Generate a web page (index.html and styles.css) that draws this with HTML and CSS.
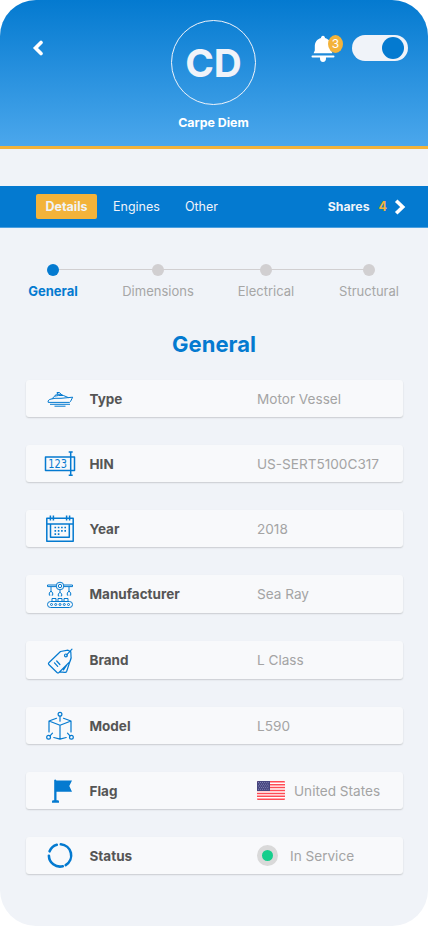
FILE: index.html
```html
<!DOCTYPE html>
<html lang="en">
<head>
<meta charset="utf-8">
<title>Carpe Diem</title>
<link rel="stylesheet" href="styles.css">
</head>
<body>
<div class="screen">
  <header class="header">
    <svg class="back" viewBox="0 0 12 16"><path d="M9 2.500 3.500 8 9 13.500"/></svg>
    <div class="vessel">
      <div class="avatar">CD</div>
      <div class="vessel-name">Carpe Diem</div>
    </div>
    <div class="actions">
      <div class="bell">
        <svg viewBox="0 0 24 28"><path d="M12 0.800c-1.300 0-2 1-2 2.300C6 4.300 3.800 7.300 3.800 11.500v4L2.600 18.300h18.800l-1.200-2.800v-4c0-4.200-2.200-7.200-6.200-8.400 0-1.300-.7-2.300-2-2.300zM1.500 20.500h21a.9.9 0 0 1 0 2H15c.3 3.200-1.200 4.500-3 4.500s-3.300-1.300-3-4.500H1.500a.9.9 0 0 1 0-2z"/></svg>
        <span class="badge">3</span>
      </div>
      <div class="toggle"><span class="knob"></span></div>
    </div>
  </header>

  <nav class="tabs">
    <span class="tab active">Details</span>
    <span class="tab engines">Engines</span>
    <span class="tab other">Other</span>
    <span class="shares">Shares</span>
    <span class="count">4</span>
    <svg class="next" viewBox="0 0 12 16"><path d="M2.200 1.800 8.700 8 2.200 14.200"/></svg>
  </nav>

  <div class="steps">
    <div class="step current"><i></i><span>General</span></div>
    <div class="step"><i></i><span>Dimensions</span></div>
    <div class="step"><i></i><span>Electrical</span></div>
    <div class="step"><i></i><span>Structural</span></div>
  </div>

  <h1>General</h1>

  <main class="cards">
    <div class="card">
      <svg class="icon thin" viewBox="0 0 36 37"><path d="M6 22.200c0-2 1.200-2.800 3-3.100l4-.8h6l11.700-1.100-2.200 4.300-1 .9H7zM10 18.800l2.500-2.600 4-.7h5l5 2.200M12.500 16l2-1.700h4.500l2.300 1.200M16 14.200l-1-1.700h2.500l1.500 1.700M8 24.300h20M12.500 26.200h11"/></svg>
      <span class="label">Type</span><span class="value">Motor Vessel</span>
    </div>
    <div class="card">
      <svg class="icon" viewBox="0 0 36 37"><path d="M3.500 12h29v13.500h-29zM28.700 7v23.500M26.700 7h4M26.700 30.200h4"/><text x="6.300" y="22.700" textLength="18.700" lengthAdjust="spacingAndGlyphs">123</text></svg>
      <span class="label">HIN</span><span class="value">US-SERT5100C317</span>
    </div>
    <div class="card">
      <svg class="icon" viewBox="0 0 36 37"><path d="M4.800 8.200h26.400v23H4.800zM4.800 14h26.400M8.500 14.500v12.700h18.800V14.500M8.400 5.500v5M11.400 5.500v5M24.600 5.500v5M27.600 5.500v5"/><path class="dots" d="M12.500 17.500h12M12.500 20.800h12M12.500 24.200h5"/></svg>
      <span class="label">Year</span><span class="value">2018</span>
    </div>
    <div class="card">
      <svg class="icon thin" viewBox="0 0 36 37"><circle cx="18" cy="10" r="3.800"/><circle cx="18" cy="10" r="1.700"/><path d="M14.200 9H5.500v1.600h8.700M21.800 9h8.700v1.600h-8.700M9 11v4M27 11v4M18 14v3M9 15l-1.700 2v2.200h1M9 15l1.700 2v2.200h-1M27 15l-1.700 2v2.200h1M27 15l1.700 2v2.200h-1M18 16.300l-1.700 1.700v2h1M18 16.300l1.700 1.700v2h-1M10 25.500v-3h4v3M16 25.500v-3h4v3M22 25.500v-3h4v3"/><rect x="5.500" y="25.500" width="25" height="6" rx="3"/><circle cx="9.500" cy="28.500" r="1"/><circle cx="13.700" cy="28.500" r="1"/><circle cx="18" cy="28.500" r="1"/><circle cx="22.300" cy="28.500" r="1"/><circle cx="26.500" cy="28.500" r="1"/></svg>
      <span class="label">Manufacturer</span><span class="value">Sea Ray</span>
    </div>
    <div class="card">
      <svg class="icon outline" viewBox="0 0 36 37"><path d="M6.800 20.800 18.500 9.500l7.500-1.300 2.800 1.600.3 6.500-1 3L17 30.500q-1 .8-2 0L6.800 22.500q-.8-.8 0-1.700zM29.200 15.500 24.700 29.200q-.5 1.400-1.800 1.200l-5.400-.5M25 22.700l-3.500 5.200M24.700 12.800 30 7.200M12.500 20.800l3.200 3.500M14.700 19l3.200 3.500"/><circle cx="23.900" cy="13.400" r="1.400"/></svg>
      <span class="label">Brand</span><span class="value">L Class</span>
    </div>
    <div class="card">
      <svg class="icon outline" viewBox="0 0 36 37"><circle cx="18" cy="7.300" r="1.900"/><circle cx="6.600" cy="30.200" r="1.900"/><circle cx="29.400" cy="30.200" r="1.900"/><path d="M18 9.200v5M14.500 11.300 7 14v11M21.500 11.300l7.500 2.700v11M7 14l11 4.300 11-4.300M18 18.300v13.700M11.800 30.500l6.200 1.600 6.200-1.600M8 28.800l2.500-2.600M28 28.800l-2.500-2.600"/></svg>
      <span class="label">Model</span><span class="value">L590</span>
    </div>
    <div class="card">
      <svg class="icon solid" viewBox="0 0 36 37"><path d="M12.200 8q1.200-1.400 2.200.5H30l-2.700 5.500L30 19.700H14.500v8.600h1.200q1.300 0 1.300 1.200v1.200h-7v-1.200q0-1.200 1.300-1.200h.9z"/></svg>
      <span class="label">Flag</span>
      <span class="value"><svg class="flag" viewBox="0 0 28 19"><path fill="#fff" d="M0 0h28v19H0z"/><path stroke="#ff4b55" stroke-width="1.460" d="M0 .73h28M0 3.650h28M0 6.580h28M0 9.500h28M0 12.420h28M0 15.350h28M0 18.270h28"/><path fill="#46467f" d="M0 0h13v10H0z"/><path stroke="#a3a5d2" stroke-width=".8" stroke-dasharray=".8 1.300" d="M1 1.500h11M2 3.200h10M1 4.900h11M2 6.600h10M1 8.300h11"/></svg>United States</span>
    </div>
    <div class="card">
      <svg class="icon ring" viewBox="0 0 36 37"><path d="M18.800 7.300A11.200 11.200 0 0 1 23.700 28.100M20.800 29.300A11.200 11.200 0 0 1 6.900 18.700M7.600 14.300A11.200 11.200 0 0 1 14.800 7.800"/></svg>
      <span class="label">Status</span>
      <span class="value"><i class="status-dot"></i>In Service</span>
    </div>
  </main>
</div>
</body>
</html>
```
FILE: styles.css
```css
* { box-sizing: border-box; }
body { margin: 0; background: #fff; font-family: Inter, "Liberation Sans", sans-serif; }
svg { display: block; flex: none; }
.screen {
  width: 428px;
  height: 926px;
  overflow: hidden;
  border-radius: 36px;
  background: #f0f3f8;
}
.header {
  display: grid;
  grid-template-columns: 171px 85px 1fr;
  height: 149px;
  background: linear-gradient(#047ad0, #4ba7ec);
  border-bottom: 3px solid #f3b33a;
}
.back { width: 12px; height: 16px; margin: 40px 0 0 32px; fill: none; stroke: #fff; stroke-width: 3.6; stroke-linecap: round; }
.vessel { display: flex; flex-direction: column; align-items: center; padding-top: 20px; }
.avatar {
  width: 85px;
  height: 85px;
  border: 1.5px solid #f0f3f9;
  border-radius: 50%;
  color: #f0f3f9;
  font-size: 38.8px;
  font-weight: 700;
  line-height: 83px;
  text-align: center;
}
.vessel-name { margin-top: 10px; color: #fff; font-size: 12.4px; font-weight: 700; line-height: 16px; white-space: nowrap; }
.actions { display: flex; justify-content: flex-end; padding: 35px 20px 0 0; }
.bell { position: relative; width: 41px; }
.bell svg { width: 24px; height: 28px; fill: #fff; }
.badge {
  position: absolute;
  left: 17px;
  top: 0;
  width: 15px;
  height: 18px;
  border-radius: 50%;
  background: #f3b33a;
  color: #fff;
  font-size: 12px;
  font-weight: 400;
  line-height: 18px;
  text-align: center;
}
.toggle { display: flex; justify-content: flex-end; width: 56px; height: 26px; padding: 2px 4px; border-radius: 13px; background: #f0f3f9; }
.knob { width: 22px; height: 22px; border-radius: 50%; background: #047ad0; }

.tabs {
  display: flex;
  align-items: center;
  height: 42px;
  margin-top: 37px;
  padding: 0 22px 0 36px;
  border-bottom: 1px solid #4ba0e0;
  background: #047ad0;
  color: #f0f3f9;
  font-size: 12.5px;
}
.active { width: 61px; height: 25px; border-radius: 2px; background: #f3b33a; font-weight: 700; line-height: 25px; text-align: center; font-size: 12.5px; }
.engines { margin-left: 16px; }
.other { margin-left: 25px; }
.shares { margin-left: auto; font-size: 12.3px; font-weight: 700; }
.count { margin-left: 9px; color: #f3b33a; font-size: 12.5px; font-weight: 700; }
.next { width: 12px; height: 16px; margin-left: 7px; fill: none; stroke: #fff; stroke-width: 3.6; }

.steps {
  display: grid;
  grid-template-columns: 105px 108px 103px 60px;
  height: 36px;
  margin: 36px 0 0 53px;
  background: linear-gradient(#d1cfd1, #d1cfd1) 0 5px / 316px 1px no-repeat;
}
.step { display: flex; flex-direction: column; align-items: center; width: 0; color: #a6a6a6; font-size: 13px; white-space: nowrap; }
.step i { flex: none; width: 12px; height: 12px; border-radius: 50%; background: #d1cfd1; }
.step span { margin-top: 7px; line-height: 16px; }
.current { color: #047ad0; font-weight: 700; }
.current i { background: #047ad0; }
h1 { margin: 30px 0 0; color: #047ad0; font-size: 22px; font-weight: 700; line-height: 28px; text-align: center; }

.cards {
  display: grid;
  grid-template-rows: repeat(3, 37px) repeat(2, 38px) repeat(3, 37px);
  gap: 28px;
  margin: 22px 25px 0 26px;
}
.card {
  display: flex;
  align-items: center;
  padding-left: 16px;
  border-radius: 3px;
  background: #f8f9fb;
  box-shadow: 0 1px 1.5px rgba(0, 0, 0, .16);
  font-size: 13.6px;
  line-height: 16px;
}
.icon { width: 36px; height: 37px; fill: none; stroke: #047ad0; stroke-width: 1.5; stroke-linejoin: round; }
.icon text { fill: #047ad0; stroke: none; font: 11.5px "DejaVu Sans", sans-serif; }
.thin { stroke-width: 1; }
.outline { stroke-width: 1.2; stroke-linecap: round; }
.dots { stroke-dasharray: 1.6 1.7; stroke-width: 1.7; }
.solid { fill: #047ad0; stroke: none; }
.ring { stroke-width: 2.6; stroke-linecap: round; }
.label { width: 167.500px; margin-left: 11.500px; color: #555; font-size: 13.500px; font-weight: 700; }
.value { display: flex; align-items: center; color: #a4a4a4; white-space: nowrap; }
.flag { width: 28px; height: 19px; margin-right: 9px; border-radius: 1px; }
.status-dot { width: 21px; height: 21px; margin-right: 12px; border: 5px solid #d9d9d9; border-radius: 50%; background: #15ce8c; }
```
